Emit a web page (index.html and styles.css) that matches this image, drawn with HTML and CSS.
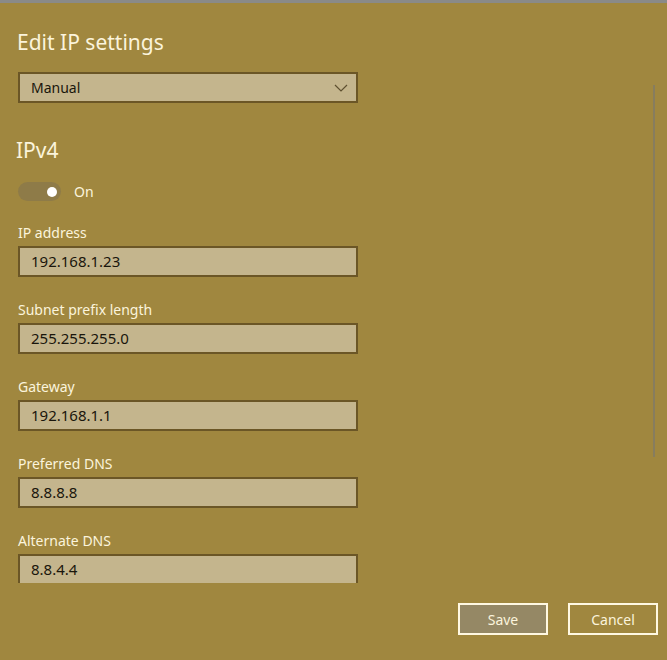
FILE: index.html
```html
<!DOCTYPE html>
<html lang="en">
<head>
    <meta charset="UTF-8">
    <title>Edit IP settings</title>
    <link rel="stylesheet" href="styles.css">
</head>
<body>

<div class="dialog">
    <div class="scroll-area">
        <h1>Edit IP settings</h1>
        <div class="select-box">
            <span>Manual</span>
            <svg class="chevron" width="14" height="8" viewBox="0 0 14 8"><polyline points="1,1 7,7 13,1" fill="none" stroke="#5e5030" stroke-width="1.2"/></svg>
        </div>

        <h2>IPv4</h2>
        <div class="toggle-row">
            <div class="toggle"><span class="knob"></span></div>
            <span class="toggle-label">On</span>
        </div>

        <div class="field">
            <label>IP address</label>
            <div class="input">192.168.1.23</div>
        </div>
        <div class="field">
            <label>Subnet prefix length</label>
            <div class="input">255.255.255.0</div>
        </div>
        <div class="field">
            <label>Gateway</label>
            <div class="input">192.168.1.1</div>
        </div>
        <div class="field">
            <label>Preferred DNS</label>
            <div class="input">8.8.8.8</div>
        </div>
        <div class="field">
            <label>Alternate DNS</label>
            <div class="input">8.8.4.4</div>
        </div>
    </div>
    <div class="scrollbar"></div>

    <div class="buttons">
        <button class="btn btn-save">Save</button>
        <button class="btn">Cancel</button>
    </div>
</div>

</body>
</html>
```

FILE: styles.css
```css
body {
    margin: 0;
    background-color: #a0873f;
    font-family: "Noto Sans", "Open Sans", sans-serif;
    color: #fbf4dc;
}
.dialog {
    position: relative;
    height: 660px;
    border-top: 3px solid #8a8a88;
    box-sizing: border-box;
}
.scroll-area {
    height: 580px;
    overflow: hidden;
    padding-left: 18px;
}
h1 {
    font-weight: 400;
    font-size: 21px;
    margin: 25px 0 0 -1px;
    line-height: 28px;
}
.select-box {
    width: 317px;
    height: 27px;
    margin-top: 16px;
    border: 2px solid #6b5626;
    background-color: #c4b58d;
    color: #1a160c;
    font-size: 14px;
    display: flex;
    align-items: center;
    justify-content: space-between;
    padding: 0 8px 0 11px;
}
h2 {
    font-weight: 400;
    font-size: 21px;
    margin: 33px 0 0 -2px;
    line-height: 28px;
}
.toggle-row {
    display: flex;
    align-items: center;
    margin-top: 17px;
    height: 20px;
}
.toggle {
    width: 43px;
    height: 19px;
    border-radius: 10px;
    background-color: #8e7b48;
    position: relative;
}
.knob {
    position: absolute;
    left: 29px;
    top: 5px;
    width: 10px;
    height: 10px;
    border-radius: 50%;
    background-color: #ffffff;
}
.toggle-label {
    font-size: 14px;
    margin-left: 13px;
}
.field {
    margin-top: 23px;
}
.field + .field {
    margin-top: 24px;
}
.field label {
    display: block;
    font-size: 14px;
    line-height: 17px;
}
.input {
    margin-top: 5px;
    width: 325px;
    height: 27px;
    line-height: 27px;
    padding-left: 11px;
    border: 2px solid #6b5626;
    background-color: #c4b58d;
    color: #1a160c;
    font-size: 15px;
}
.scrollbar {
    position: absolute;
    right: 12px;
    top: 82px;
    width: 2px;
    height: 372px;
    background-color: #877d5e;
}
.buttons {
    display: flex;
    justify-content: flex-end;
    gap: 20px;
    padding-right: 9px;
    margin-top: 20px;
}
.btn {
    width: 90px;
    height: 32px;
    border: 2px solid #fff8e2;
    background-color: transparent;
    color: #fbf4dc;
    font-family: "Noto Sans", "Open Sans", sans-serif;
    font-size: 14px;
    padding: 0;
}
.btn-save {
    background-color: #958865;
}
```
